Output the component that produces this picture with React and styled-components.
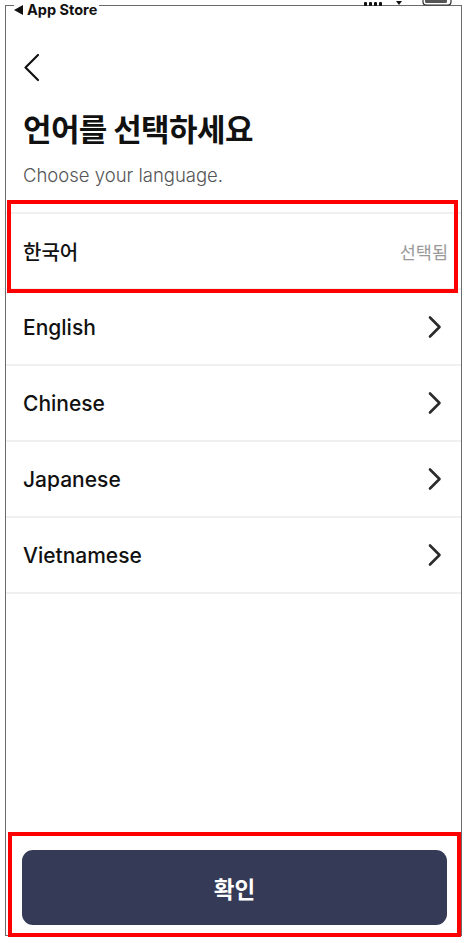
import React from "react";
import styled, { createGlobalStyle } from "styled-components";

const Global = createGlobalStyle`
  html, body { margin: 0; padding: 0; background: #ffffff; }
  body { font-family: "Inter", "Noto Sans CJK KR", sans-serif; -webkit-font-smoothing: antialiased; }
  * { box-sizing: border-box; }
`;

const Page = styled.div`
  position: relative;
  width: 468px;
  height: 943px;
  overflow: hidden;
  background: #fff;
`;

const StatusBar = styled.div`
  position: absolute;
  left: 0;
  top: 0;
  width: 468px;
  height: 20px;
  pointer-events: none;
`;

const BackToApp = styled.div`
  position: absolute;
  left: 14px;
  top: 0;
  display: flex;
  align-items: center;
  gap: 4px;
  background: #fff;
  padding-right: 2px;
  font-family: "Inter", "Liberation Sans", sans-serif;
  font-weight: 700;
  font-size: 14.5px;
  line-height: 20px;
  color: #111;
`;

const StatusIcons = styled.svg`
  position: absolute;
  right: 14px;
  top: -4px;
`;

const Screen = styled.div`
  margin: 5px 6px 0 5px;
  height: 931px;
  border: 1.5px solid #6b6b6b;
  display: flex;
  flex-direction: column;
  background: #fff;
`;

const Header = styled.div`
  padding: 46px 17px 0;
  display: flex;
  flex-direction: column;
`;

const BackButton = styled.button`
  width: 24px;
  height: 32px;
  padding: 0;
  border: 0;
  background: none;
  display: flex;
  align-items: center;
  justify-content: flex-start;
`;

const Title = styled.h1`
  margin: 23px 0 0;
  font-family: "Noto Sans CJK KR", sans-serif;
  font-weight: 700;
  font-size: 31px;
  line-height: 42px;
  letter-spacing: -0.6px;
  color: #111;
`;

const Subtitle = styled.p`
  margin: 13px 0 0;
  font-family: "Inter", "Noto Sans CJK KR", sans-serif;
  font-weight: 300;
  font-size: 18.5px;
  line-height: 26px;
  color: #555;
`;

const List = styled.ul`
  list-style: none;
  margin: 24px 0 0;
  padding: 0;
  border-top: 2px solid #f0f0f0;
`;

const Row = styled.li`
  height: 76px;
  padding: 0 13px 0 17px;
  display: flex;
  align-items: center;
  justify-content: space-between;
  border-bottom: 2px solid #f0f0f0;
`;

const Label = styled.span`
  font-family: "Inter", "Noto Sans CJK KR", sans-serif;
  font-weight: 500;
  font-size: ${(p) => (p.$ko ? "20px" : "21px")};
  color: #111;
`;

const Selected = styled.span`
  font-family: "Noto Sans CJK KR", sans-serif;
  font-size: 17.5px;
  color: #9a9a9a;
`;

const ChevronSvg = styled.svg`
  margin-right: 5px;
`;

const Spacer = styled.div`
  flex: 1;
`;

const Footer = styled.div`
  padding: 0 14px 10px 16px;
`;

const ConfirmButton = styled.button`
  width: 100%;
  height: 75px;
  border: 0;
  border-radius: 11px;
  background: #353b56;
  color: #fff;
  font-family: "Noto Sans CJK KR", sans-serif;
  font-weight: 700;
  font-size: 22.5px;
  display: flex;
  align-items: center;
  justify-content: center;
`;

const Highlight = styled.div`
  position: absolute;
  border: 4px solid #ff0000;
  pointer-events: none;
`;

const Chevron = () => (
  <ChevronSvg width="16" height="24" viewBox="0 0 16 24" fill="none">
    <path d="M3 2.5 L12.5 12 L3 21.5" stroke="#2b2b2b" strokeWidth="2.6" strokeLinecap="round" strokeLinejoin="round" />
  </ChevronSvg>
);

const BackIcon = () => (
  <svg width="18" height="30" viewBox="0 0 18 30" fill="none">
    <path d="M15 2 L2.5 14.5 L15 27" stroke="#111" strokeWidth="2.2" strokeLinecap="round" strokeLinejoin="round" />
  </svg>
);

const languages = [
  { name: "한국어", ko: true, selected: true },
  { name: "English" },
  { name: "Chinese" },
  { name: "Japanese" },
  { name: "Vietnamese" },
];

export default function App() {
  return (
    <>
      <Global />
      <Page>
        <Screen>
          <Header>
            <BackButton aria-label="back">
              <BackIcon />
            </BackButton>
            <Title>언어를 선택하세요</Title>
            <Subtitle>Choose your language.</Subtitle>
          </Header>
          <List>
            {languages.map((l) => (
              <Row key={l.name}>
                <Label $ko={l.ko}>{l.name}</Label>
                {l.selected ? <Selected>선택됨</Selected> : <Chevron />}
              </Row>
            ))}
          </List>
          <Spacer />
          <Footer>
            <ConfirmButton>확인</ConfirmButton>
          </Footer>
        </Screen>
        <StatusBar>
          <BackToApp>
            <svg width="9" height="10" viewBox="0 0 9 10">
              <path d="M0 5 L9 0 L9 10 Z" fill="#111" />
            </svg>
            App Store
          </BackToApp>
          <StatusIcons width="90" height="12" viewBox="0 0 90 12">
            <rect x="0" y="6" width="3" height="4" rx="1" fill="#111" />
            <rect x="5" y="6" width="3" height="4" rx="1" fill="#111" />
            <rect x="10" y="6" width="3" height="4" rx="1" fill="#111" />
            <rect x="15" y="6" width="3" height="4" rx="1" fill="#111" />
            <path d="M32 9 L35 5 L38 9 Z" fill="#111" transform="rotate(180 35 7)" />
            <rect x="59" y="-2" width="28" height="11" rx="3" fill="none" stroke="#333" strokeWidth="1.2" />
            <rect x="61" y="0" width="22" height="7" rx="1.5" fill="#555" />
          </StatusIcons>
        </StatusBar>
        <Highlight style={{ left: 7, top: 200, width: 451, height: 93 }} />
        <Highlight style={{ left: 8, top: 832, width: 453, height: 105 }} />
      </Page>
    </>
  );
}
